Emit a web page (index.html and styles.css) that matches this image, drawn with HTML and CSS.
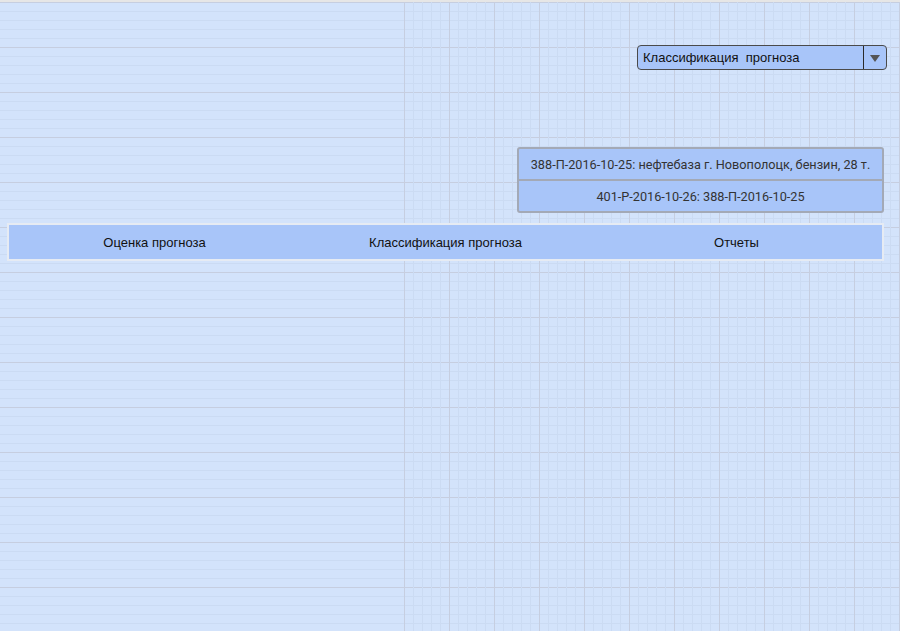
FILE: index.html
```html
<!DOCTYPE html>
<html lang="ru">
<head>
<meta charset="utf-8">
<title>Прогноз</title>
<link rel="stylesheet" href="styles.css">
</head>
<body>
<div class="page">
  <div class="toolbar">
    <div class="select">
      <span class="select-text">Классификация&nbsp; прогноза</span>
      <span class="select-btn"><span class="arrow"></span></span>
    </div>
  </div>
  <div class="cards">
    <div class="card">388-П-2016-10-25: нефтебаза г. Новополоцк, бензин, 28 т.</div>
    <div class="card">401-Р-2016-10-26: 388-П-2016-10-25</div>
  </div>
  <div class="tabs">
    <div class="tab">Оценка прогноза</div>
    <div class="tab">Классификация прогноза</div>
    <div class="tab">Отчеты</div>
  </div>
</div>
</body>
</html>
```

FILE: styles.css
```css
html, body {
  margin: 0;
  padding: 0;
  height: 100%;
}
body {
  background-color: #d3e3fb;
  background-image:
    linear-gradient(#e6e6e6, #e6e6e6),
    repeating-linear-gradient(to right, #c6cee0 0 1px, transparent 1px 45px),
    repeating-linear-gradient(to right, #cbdbf3 0 1px, transparent 1px 9px),
    linear-gradient(to bottom, #c6cee0 0 1px, transparent 1px),
    linear-gradient(to bottom, #cbdbf3 0 1px, transparent 1px);
  background-size:
    100% 2px,
    496px 100%,
    496px 100%,
    100% 45px,
    100% 9px;
  background-position:
    0 0,
    404px 0,
    404px 0,
    0 2px,
    0 2px;
  background-repeat:
    no-repeat,
    no-repeat,
    no-repeat,
    repeat,
    repeat;
  font-family: "Liberation Sans", Arial, sans-serif;
  overflow: hidden;
}
.page {
  display: flex;
  flex-direction: column;
  padding-top: 45px;
}
.toolbar {
  display: flex;
  justify-content: flex-end;
  padding-right: 13px;
}
.select {
  width: 250px;
  height: 25px;
  box-sizing: border-box;
  border: 1px solid #4a4a4a;
  border-radius: 4px;
  background: #a8c5f9;
  display: flex;
  align-items: center;
}
.select-text {
  flex: 1;
  padding-left: 5px;
  font-size: 13px;
  color: #111;
  white-space: nowrap;
}
.select-btn {
  width: 22px;
  height: 100%;
  border-left: 1px solid #2a2a2a;
  display: flex;
  align-items: center;
  justify-content: center;
}
.arrow {
  width: 0;
  height: 0;
  border-left: 5px solid transparent;
  border-right: 5px solid transparent;
  border-top: 7px solid #555;
  margin-top: 1px;
}
.cards {
  align-self: flex-end;
  margin-right: 16px;
  margin-top: 77px;
  width: 367px;
  box-sizing: border-box;
  border: 2px solid #a3a9b6;
  border-radius: 3px;
  background: #a8c5f9;
  display: flex;
  flex-direction: column;
}
.card {
  height: 30px;
  display: flex;
  align-items: center;
  justify-content: center;
  font-family: Roboto, "Liberation Sans", sans-serif;
  font-size: 12.7px;
  color: #333;
  white-space: nowrap;
}
.card + .card {
  border-top: 2px solid #a3a9b6;
}
.tabs {
  margin-top: 10px;
  margin-left: 7px;
  width: 877px;
  box-sizing: border-box;
  border: 2px solid #e6ebf3;
  background: #a8c5f9;
  display: grid;
  grid-template-columns: repeat(3, 1fr);
  height: 38px;
}
.tab {
  display: flex;
  align-items: center;
  justify-content: center;
  font-size: 13px;
  color: #111;
}
```
